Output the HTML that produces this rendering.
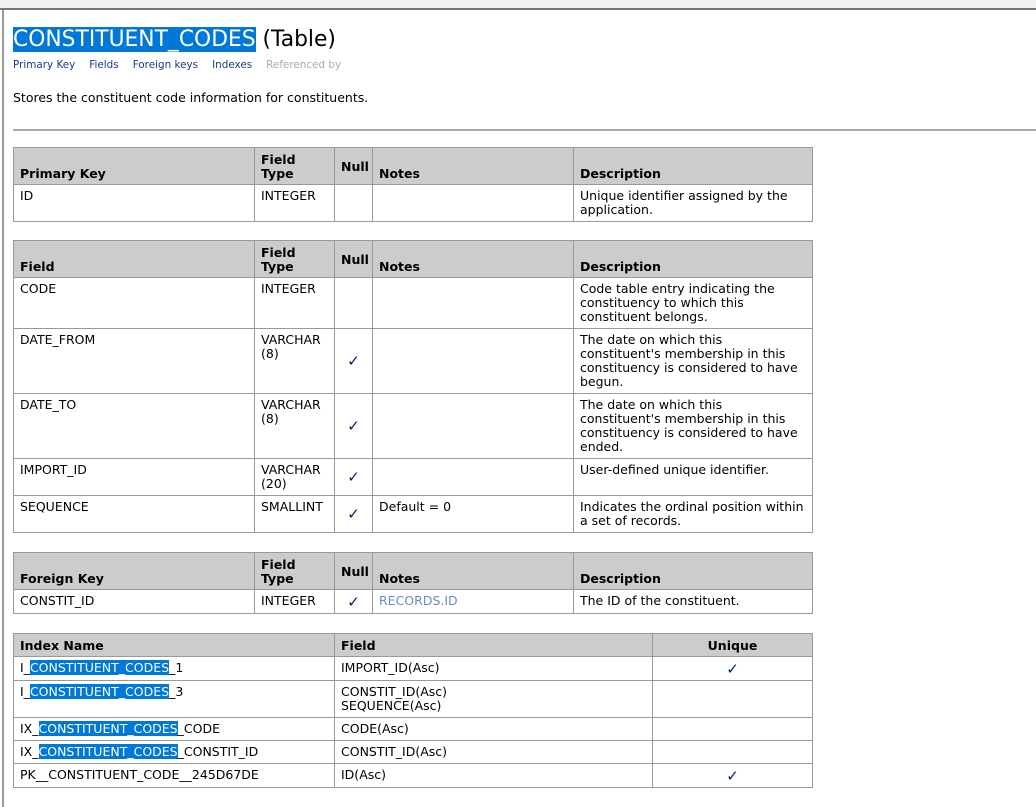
<!DOCTYPE html>
<html><head><meta charset="utf-8"><style>
*{margin:0;padding:0;box-sizing:border-box}
body{width:1036px;height:807px;background:#fff;font-family:"DejaVu Sans",Verdana,sans-serif;font-size:12.5px;color:#000;position:relative;overflow:hidden}
.top{position:absolute;left:0;top:0;width:1036px;height:10px;background:#f0f0f0;border-bottom:2px solid #777}
.lb{position:absolute;left:2px;top:10px;width:2px;height:797px;background:#999}
.t{position:absolute;left:13px;top:27px;font-size:21.8px;line-height:26px;white-space:nowrap}
.sel{background:#0078d7;color:#fff}
.links{position:absolute;left:13px;top:59px;font-size:10.4px;color:#1a3a8c}
.links span{margin-right:14px}
.desc{position:absolute;left:13px;top:90px;font-size:12.5px}
.hr{position:absolute;left:13px;top:129px;width:1023px;height:2px;background:#aaa}
table{position:absolute;left:13px;border-collapse:collapse;table-layout:fixed;width:799px}
td,th{border:1px solid #999;padding:4px 6px 0 6px;vertical-align:top;font-size:12.5px;line-height:14px;text-align:left;font-weight:normal;overflow:hidden;white-space:nowrap}
th{background:#ccc;font-weight:bold;vertical-align:bottom;padding-bottom:3px}
th.m{vertical-align:middle}
.ck{text-align:center;vertical-align:middle;color:#002266;font-size:15px;padding:0}
.lnk{color:#6a8cc0}
</style></head><body>
<div class="top"></div><div class="lb"></div>
<div class="t"><span class="sel">CONSTITUENT_CODES</span> (Table)</div>
<div class="links"><span>Primary Key</span><span>Fields</span><span>Foreign keys</span><span>Indexes</span><span style="color:#aaa">Referenced by</span></div>
<div class="desc">Stores the constituent code information for constituents.</div>
<div class="hr"></div>
<table style="top:147px"><colgroup><col style="width:241px"><col style="width:80px"><col style="width:38px"><col style="width:201px"><col style="width:239px"></colgroup>
<tr style="height:37px"><th>Primary Key</th><th>Field<br>Type</th><th class="m">Null</th><th>Notes</th><th>Description</th></tr>
<tr style="height:37px"><td>ID</td><td>INTEGER</td><td></td><td></td><td>Unique identifier assigned by the<br>application.</td></tr>
</table>
<table style="top:240px"><colgroup><col style="width:241px"><col style="width:80px"><col style="width:38px"><col style="width:201px"><col style="width:239px"></colgroup>
<tr style="height:37px"><th>Field</th><th>Field<br>Type</th><th class="m">Null</th><th>Notes</th><th>Description</th></tr>
<tr style="height:51px"><td>CODE</td><td>INTEGER</td><td></td><td></td><td>Code table entry indicating the<br>constituency to which this<br>constituent belongs.</td></tr>
<tr style="height:65px"><td>DATE_FROM</td><td>VARCHAR<br>(8)</td><td class="ck">✓</td><td></td><td>The date on which this<br>constituent's membership in this<br>constituency is considered to have<br>begun.</td></tr>
<tr style="height:65px"><td>DATE_TO</td><td>VARCHAR<br>(8)</td><td class="ck">✓</td><td></td><td>The date on which this<br>constituent's membership in this<br>constituency is considered to have<br>ended.</td></tr>
<tr style="height:37px"><td>IMPORT_ID</td><td>VARCHAR<br>(20)</td><td class="ck">✓</td><td></td><td>User-defined unique identifier.</td></tr>
<tr style="height:37px"><td>SEQUENCE</td><td>SMALLINT</td><td class="ck">✓</td><td>Default = 0</td><td>Indicates the ordinal position within<br>a set of records.</td></tr>
</table>
<table style="top:552px"><colgroup><col style="width:241px"><col style="width:80px"><col style="width:38px"><col style="width:201px"><col style="width:239px"></colgroup>
<tr style="height:37px"><th>Foreign Key</th><th>Field<br>Type</th><th class="m">Null</th><th>Notes</th><th>Description</th></tr>
<tr style="height:24px"><td>CONSTIT_ID</td><td>INTEGER</td><td class="ck">✓</td><td class="lnk">RECORDS.ID</td><td>The ID of the constituent.</td></tr>
</table>
<table style="top:633px"><colgroup><col style="width:321px"><col style="width:318px"><col style="width:160px"></colgroup>
<tr style="height:23px"><th>Index Name</th><th>Field</th><th style="text-align:center">Unique</th></tr>
<tr style="height:24px"><td>I_<span class="sel">CONSTITUENT_CODES</span>_1</td><td>IMPORT_ID(Asc)</td><td class="ck">✓</td></tr>
<tr style="height:37px"><td>I_<span class="sel">CONSTITUENT_CODES</span>_3</td><td>CONSTIT_ID(Asc)<br>SEQUENCE(Asc)</td><td></td></tr>
<tr style="height:23px"><td>IX_<span class="sel">CONSTITUENT_CODES</span>_CODE</td><td>CODE(Asc)</td><td></td></tr>
<tr style="height:23px"><td>IX_<span class="sel">CONSTITUENT_CODES</span>_CONSTIT_ID</td><td>CONSTIT_ID(Asc)</td><td></td></tr>
<tr style="height:24px"><td>PK__CONSTITUENT_CODE__245D67DE</td><td>ID(Asc)</td><td class="ck">✓</td></tr>
</table>
</body></html>
